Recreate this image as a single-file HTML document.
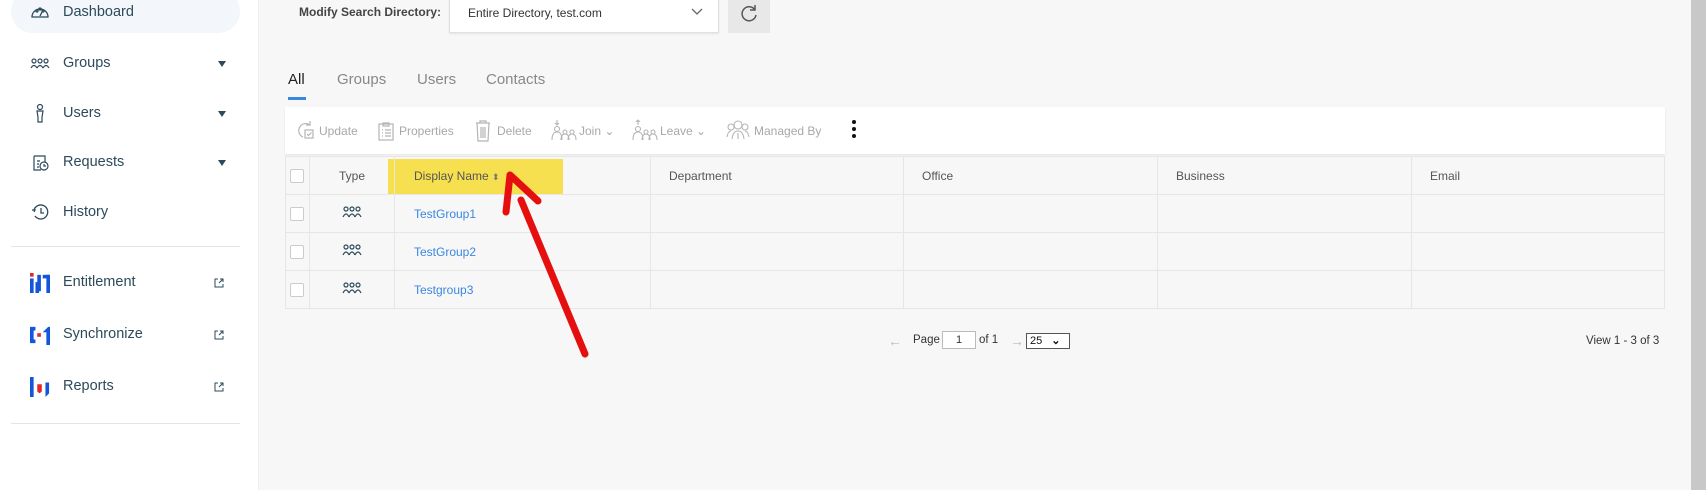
<!DOCTYPE html>
<html><head><meta charset="utf-8"><style>
*{box-sizing:border-box;margin:0;padding:0}
body{width:1706px;height:490px;overflow:hidden;background:#f7f7f7;font-family:"Liberation Sans",sans-serif;position:relative}
.side{position:absolute;left:0;top:0;width:259px;height:490px;background:#fff;border-right:1px solid #eceef1}
.pill{position:absolute;left:11px;top:-10px;width:229px;height:43px;border-radius:22px;background:#f3f6fa}
.nav{position:absolute;left:63px;font-size:14.5px;color:#2c4a5a}
.ic{position:absolute;left:30px;width:20px;height:20px}
.caret{position:absolute;left:218px;width:0;height:0;border-left:4px solid transparent;border-right:4px solid transparent;border-top:6px solid #2c4a5a}
.ext{position:absolute;left:214px;width:10px;height:10px}
.hr{position:absolute;left:11px;width:229px;height:1px;background:#e2e4e8}
.abs{position:absolute}
.tb{position:absolute;top:107px;left:285px;width:1380px;height:47px;background:#fff;box-shadow:0 1px 2px rgba(0,0,0,.08)}
.tbi{position:absolute;top:17px;font-size:12px;color:#a8a8a8}
table{position:absolute;left:285px;top:156px;border-collapse:collapse;font-size:12px;color:#555}
td{border:1px solid #e6e6e6;height:38px;padding:0}
.lnk{color:#3a87e0;padding-left:19px}
.cb{display:inline-block;width:14px;height:14px;border:1px solid #ccc;border-radius:2px;background:#fff;margin-left:4px;vertical-align:middle}
</style></head><body>
<div class="side">
<div class="pill"></div>
<svg class="ic" style="top:2px" viewBox="0 0 20 20" fill="none" stroke="#2c4a5a" stroke-width="1.3"><path d="M2 15a8 8 0 1 1 16 0z"/><circle cx="7" cy="9" r="1"/><circle cx="10" cy="7" r="1"/><circle cx="13" cy="9" r="1"/><path d="M10 14l2-4"/></svg>
<div class="nav" style="top:4px">Dashboard</div>
<svg class="ic" style="top:54px" viewBox="0 0 20 20" fill="none" stroke="#2c4a5a" stroke-width="1.2"><circle cx="4" cy="7" r="2"/><circle cx="10" cy="7" r="2"/><circle cx="16" cy="7" r="2"/><path d="M1 14q3-5 6 0M7 14q3-5 6 0M13 14q3-5 6 0"/></svg>
<div class="nav" style="top:55px">Groups</div><div class="caret" style="top:61px"></div>
<svg class="ic" style="top:103px" viewBox="0 0 20 20" fill="none" stroke="#2c4a5a" stroke-width="1.2"><circle cx="10" cy="4" r="2.5"/><path d="M7 8h6l-1 6v5h-4v-5z"/></svg>
<div class="nav" style="top:105px">Users</div><div class="caret" style="top:111px"></div>
<svg class="ic" style="top:152px" viewBox="0 0 20 20" fill="none" stroke="#2c4a5a" stroke-width="1.2"><path d="M4 4h11v6M4 4v14h7"/><path d="M7 9h3M7 12h2M7 15h2"/><circle cx="14" cy="14" r="4"/><path d="M14 12v2h2"/></svg>
<div class="nav" style="top:154px">Requests</div><div class="caret" style="top:160px"></div>
<svg class="ic" style="top:202px" viewBox="0 0 20 20" fill="none" stroke="#2c4a5a" stroke-width="1.3"><path d="M4 8a7 7 0 1 1 1 6"/><path d="M2 8h3l-1 2"/><path d="M11 6v5h3"/></svg>
<div class="nav" style="top:204px">History</div>
<div class="hr" style="top:246px"></div>
<svg class="ic" style="top:272px;height:22px" viewBox="0 0 22 22"><rect x="0" y="0" width="4" height="4" fill="#e02a2a"/><rect x="0" y="6" width="4" height="16" fill="#1456d9"/><rect x="6" y="10" width="4" height="12" fill="#1456d9"/><rect x="8" y="2" width="4" height="18" fill="#1456d9"/><rect x="14" y="2" width="8" height="4" fill="#1456d9"/><rect x="18" y="2" width="4" height="20" fill="#1456d9"/></svg>
<div class="nav" style="top:274px">Entitlement</div>
<svg class="ext" style="top:278px" viewBox="0 0 10 10" fill="none" stroke="#2c4a5a" stroke-width="1"><path d="M4 1H1v8h8V6M6 1h3v3M9 1L5 5"/></svg>
<svg class="ic" style="top:324px;height:22px" viewBox="0 0 22 22"><path d="M0 2h6v4H4v10h2v4H0z" fill="#1456d9"/><rect x="8" y="9" width="4" height="4" fill="#e02a2a"/><path d="M14 8l6-6h2v20h-4V8z" fill="#1456d9"/></svg>
<div class="nav" style="top:326px">Synchronize</div>
<svg class="ext" style="top:330px" viewBox="0 0 10 10" fill="none" stroke="#2c4a5a" stroke-width="1"><path d="M4 1H1v8h8V6M6 1h3v3M9 1L5 5"/></svg>
<svg class="ic" style="top:376px;height:22px" viewBox="0 0 22 22"><rect x="0" y="0" width="4" height="22" fill="#1456d9"/><path d="M8 8h5v8l-2.5 2L8 16z" fill="#e02a2a"/><path d="M17 6h4v12l-4 4z" fill="#1456d9"/></svg>
<div class="nav" style="top:378px">Reports</div>
<svg class="ext" style="top:382px" viewBox="0 0 10 10" fill="none" stroke="#2c4a5a" stroke-width="1"><path d="M4 1H1v8h8V6M6 1h3v3M9 1L5 5"/></svg>
<div class="hr" style="top:423px"></div>
</div>

<div class="abs" style="left:299px;top:5px;font-size:12px;font-weight:bold;color:#444">Modify Search Directory:</div>
<div class="abs" style="left:449px;top:-2px;width:270px;height:35px;background:#fff;border:1px solid #e0e0e0;box-shadow:0 1px 2px rgba(0,0,0,.08)"></div>
<div class="abs" style="left:468px;top:6px;font-size:12px;color:#333">Entire Directory, test.com</div>
<svg class="abs" style="left:691px;top:8px" width="12" height="8" viewBox="0 0 12 8" fill="none" stroke="#666" stroke-width="1.3"><path d="M1 1l5 5 5-5"/></svg>
<div class="abs" style="left:728px;top:0;width:42px;height:33px;background:#e8e8e8"></div>
<svg class="abs" style="left:739px;top:4px" width="20" height="20" viewBox="0 0 20 20" fill="none" stroke="#555" stroke-width="1.5"><path d="M16 6A7 7 0 1 0 17 11"/><path d="M16 1v5h-5"/></svg>

<div class="abs" style="left:288px;top:71px;font-size:15px;color:#222">All</div>
<div class="abs" style="left:337px;top:71px;font-size:15px;color:#888">Groups</div>
<div class="abs" style="left:417px;top:71px;font-size:15px;color:#888">Users</div>
<div class="abs" style="left:486px;top:71px;font-size:15px;color:#888">Contacts</div>
<div class="abs" style="left:288px;top:97px;width:18px;height:3px;background:#3a87e0"></div>

<div class="tb">
<svg class="abs" style="left:10px;top:13px" width="20" height="20" viewBox="0 0 20 20" fill="none" stroke="#b5b5b5" stroke-width="1.2"><path d="M15 5A7 7 0 1 0 8 17"/><path d="M15 1v4h-4"/><rect x="10" y="10" width="8" height="8"/><path d="M12 14l1.5 1.5 3-3"/></svg>
<div class="tbi" style="left:34px">Update</div>
<svg class="abs" style="left:92px;top:14px" width="18" height="20" viewBox="0 0 18 20" fill="none" stroke="#b5b5b5" stroke-width="1.2"><rect x="2" y="3" width="14" height="16"/><path d="M6 2h6v3H6zM5 9h1M8 9h6M5 12h1M8 12h6M5 15h1M8 15h6"/></svg>
<div class="tbi" style="left:114px">Properties</div>
<svg class="abs" style="left:190px;top:13px" width="16" height="22" viewBox="0 0 16 22" fill="none" stroke="#b5b5b5" stroke-width="1.2"><path d="M1 3h14M5 3V1h6v2M2 3l1 18h10l1-18M6 7v11M8 7v11M10 7v11"/></svg>
<div class="tbi" style="left:212px">Delete</div>
<svg class="abs" style="left:266px;top:12px" width="26" height="22" viewBox="0 0 26 22" fill="none" stroke="#b5b5b5" stroke-width="1.1"><path d="M6 1v5M4 4l2 2 2-2"/><circle cx="6" cy="10" r="2.5"/><path d="M1 21q0-8 5-8t5 8"/><circle cx="14" cy="13" r="2"/><path d="M10 21q0-6 4-6t4 6"/><circle cx="21" cy="13" r="2"/><path d="M17 21q0-6 4-6t4 6"/></svg>
<div class="tbi" style="left:294px">Join ⌄</div>
<svg class="abs" style="left:347px;top:12px" width="26" height="22" viewBox="0 0 26 22" fill="none" stroke="#b5b5b5" stroke-width="1.1"><path d="M6 6V1M4 3l2-2 2 2"/><circle cx="6" cy="10" r="2.5"/><path d="M1 21q0-8 5-8t5 8"/><circle cx="14" cy="13" r="2"/><path d="M10 21q0-6 4-6t4 6"/><circle cx="21" cy="13" r="2"/><path d="M17 21q0-6 4-6t4 6"/></svg>
<div class="tbi" style="left:375px">Leave ⌄</div>
<svg class="abs" style="left:441px;top:12px" width="24" height="22" viewBox="0 0 24 22" fill="none" stroke="#b5b5b5" stroke-width="1.1"><circle cx="12" cy="6" r="4"/><circle cx="5" cy="8" r="3"/><circle cx="19" cy="8" r="3"/><path d="M1 18q1-6 4-6M23 18q-1-6-4-6M6 20q1-8 6-8t6 8M12 14v6"/></svg>
<div class="tbi" style="left:469px">Managed By</div>
<div class="abs" style="left:567px;top:13px;width:4px"><div style="width:4px;height:4px;border-radius:2px;background:#111;margin-bottom:3px"></div><div style="width:4px;height:4px;border-radius:2px;background:#111;margin-bottom:3px"></div><div style="width:4px;height:4px;border-radius:2px;background:#111"></div></div>
</div>

<div class="abs" style="left:388px;top:159px;width:175px;height:35px;background:#f7e04f"></div>
<table>
<tr style="height:38px"><td style="width:24px"><span class="cb"></span></td><td style="width:85px;text-align:center">Type</td><td style="width:256px;padding-left:19px">Display Name <span style="font-size:9px;color:#777">⬍</span></td><td style="width:253px;padding-left:18px">Department</td><td style="width:254px;padding-left:18px">Office</td><td style="width:254px;padding-left:18px">Business</td><td style="width:253px;padding-left:18px">Email</td></tr>
<tr><td><span class="cb"></span></td><td style="text-align:center"><svg width="20" height="12" viewBox="0 0 20 12" fill="none" stroke="#2c4a5a" stroke-width="1.2"><circle cx="4" cy="3" r="2"/><circle cx="10" cy="3" r="2"/><circle cx="16" cy="3" r="2"/><path d="M1 11q3-6 6 0M7 11q3-6 6 0M13 11q3-6 6 0"/></svg></td><td class="lnk">TestGroup1</td><td></td><td></td><td></td><td></td></tr>
<tr><td><span class="cb"></span></td><td style="text-align:center"><svg width="20" height="12" viewBox="0 0 20 12" fill="none" stroke="#2c4a5a" stroke-width="1.2"><circle cx="4" cy="3" r="2"/><circle cx="10" cy="3" r="2"/><circle cx="16" cy="3" r="2"/><path d="M1 11q3-6 6 0M7 11q3-6 6 0M13 11q3-6 6 0"/></svg></td><td class="lnk">TestGroup2</td><td></td><td></td><td></td><td></td></tr>
<tr><td><span class="cb"></span></td><td style="text-align:center"><svg width="20" height="12" viewBox="0 0 20 12" fill="none" stroke="#2c4a5a" stroke-width="1.2"><circle cx="4" cy="3" r="2"/><circle cx="10" cy="3" r="2"/><circle cx="16" cy="3" r="2"/><path d="M1 11q3-6 6 0M7 11q3-6 6 0M13 11q3-6 6 0"/></svg></td><td class="lnk">Testgroup3</td><td></td><td></td><td></td><td></td></tr>
</table>

<div class="abs" style="left:888px;top:333px;font-size:14px;color:#bbb">←</div>
<div class="abs" style="left:913px;top:334px;font-size:11.5px;color:#333">Page</div>
<div class="abs" style="left:942px;top:331px;width:34px;height:18px;background:#fff;border:1px solid #bbb;font-size:11px;text-align:center;line-height:16px;color:#333">1</div>
<div class="abs" style="left:979px;top:334px;font-size:11.5px;color:#333">of 1</div>
<div class="abs" style="left:1010px;top:333px;font-size:14px;color:#bbb">→</div>
<div class="abs" style="left:1026px;top:333px;width:44px;height:16px;background:#fff;border:1px solid #555;font-size:11px;line-height:14px;padding-left:3px;color:#111">25 <span style="font-weight:bold;margin-left:6px">⌄</span></div>
<div class="abs" style="left:1586px;top:335px;font-size:11.5px;color:#333">View 1 - 3 of 3</div>

<svg class="abs" style="left:0;top:0" width="1706" height="490"><path d="M585 354L521 200" stroke="#e60f0f" stroke-width="7" stroke-linecap="round"/><path d="M510 175L506 212M510 175L538 201" stroke="#e60f0f" stroke-width="7" stroke-linecap="round" fill="none"/></svg>

<div class="abs" style="left:1691px;top:0;width:15px;height:490px;background:#c8c8c8"></div>
</body></html>
